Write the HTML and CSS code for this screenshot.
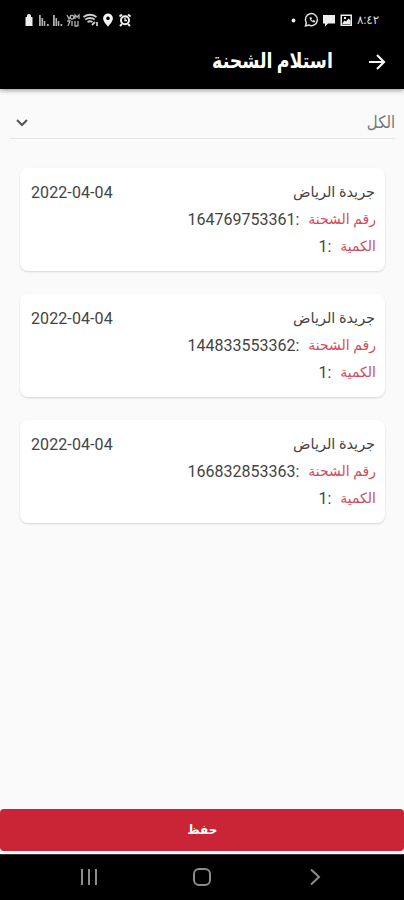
FILE: index.html
```html
<!DOCTYPE html>
<html lang="ar" dir="rtl">
<head>
<meta charset="utf-8">
<title>استلام الشحنة</title>
<link rel="stylesheet" href="styles.css">
</head>
<body>
<div class="app">
  <div class="status" dir="ltr">
    <svg class="status-left" width="108" height="16" viewBox="0 0 108 16" fill="#ddd">
      <path fill="#eee" d="M1.500 5h1.500v-1.300q0-1.700 2-1.700t2 1.700V5h1.500v9h-7z"/>
      <g opacity=".8"><path d="M15 3h1.800v11H15zM17.500 6h1.600v8h-1.600zM19.800 9h1.500v5h-1.500zM23 12h1.700v2H23zM29 3h1.800v11H29zM31.500 6h1.600v8h-1.600zM33.800 9h1.500v5h-1.500zM36.500 12h1.700v2h-1.700z"/>
      <path fill="none" stroke="#ddd" stroke-width="1.300" d="M43 3l2 4 2-4M48 7a1.800 1.800 0 1 1 .1 0M51 7V3l2 2 2-2v4M43 9h3l-2 5M48 9v5M51 9v5h3M54 9v5"/></g>
      <g fill="none" stroke="#ccc" stroke-width="1.800"><path d="M59.500 5q6.500-4.500 13 0M61.300 7.500q4.700-3 9.400 0M63.500 10q2.500-1.500 5 0"/><path d="M68 13l3-3M73 10v4"/></g>
      <path fill="#f5f5f5" fill-rule="evenodd" d="M84 1.500a4.900 4.900 0 0 1 4.900 4.900C88.900 9.500 84 14.500 84 14.500S79.100 9.500 79.100 6.400A4.900 4.900 0 0 1 84 1.500m0 3a1.800 1.800 0 1 0 .01 0z"/>
      <g fill="none" stroke="#eee" stroke-width="2"><circle cx="101" cy="8.300" r="4"/><path d="M95.500 4.500l2.500-2M106.500 4.500l-2.500-2M98 12l-2 2M104 12l2 2"/><path stroke-width="1.300" d="M101 5.500V8.500h2"/></g>
    </svg>
    <div class="status-right">
      <svg width="62" height="16" viewBox="0 0 62 16">
        <circle cx="3.500" cy="8.500" r="1.900" fill="#eee"/>
        <path d="M15.500 14l.8-3.200a6 6 0 1 1 2.400 2.200z" fill="none" stroke="#ddd" stroke-width="1.500"/>
        <path d="M19.500 5.500q.5 4.500 5 5l1-1.500-2-1-1 .8q-1-.5-1.200-1.500l.7-.8-.8-1.500z" fill="#ddd"/>
        <path d="M33 3h12v8.500h-7L35 14.500v-3h-2z" fill="#eee"/>
        <path fill-rule="evenodd" d="M50.500 2.500h11.500v11.500H50.500zM52 4v8.500h8.500V4z" fill="#eee"/><path d="M52.500 11l2-2.500 1.500 1 2.500-3 2 2v3.500h-8zM54 5h2v2h-2z" fill="#eee"/>
      </svg>
      <span class="clock">٨:٤٢</span>
    </div>
  </div>
  <header class="bar">
    <svg width="18" height="18" viewBox="0 0 18 18" fill="none" stroke="#f5f5f5" stroke-width="2.200"><path d="M1 9h15M9 2l7 7-7 7"/></svg>
    <h1>استلام الشحنة</h1>
  </header>
  <main>
    <div class="select">
      <span class="choice">الكل</span>
      <svg width="12" height="8" viewBox="0 0 12 8" fill="none" stroke="#555" stroke-width="2"><path d="M1 1l5 5 5-5"/></svg>
    </div>
    <div class="cards">
      <article class="card">
        <div class="row top"><span class="name">جريدة الرياض</span><time>2022-04-04</time></div>
        <div class="row"><span class="label">رقم الشحنة</span><span class="value">:164769753361</span></div>
        <div class="row"><span class="label">الكمية</span><span class="value">:1</span></div>
      </article>
      <article class="card">
        <div class="row top"><span class="name">جريدة الرياض</span><time>2022-04-04</time></div>
        <div class="row"><span class="label">رقم الشحنة</span><span class="value">:144833553362</span></div>
        <div class="row"><span class="label">الكمية</span><span class="value">:1</span></div>
      </article>
      <article class="card">
        <div class="row top"><span class="name">جريدة الرياض</span><time>2022-04-04</time></div>
        <div class="row"><span class="label">رقم الشحنة</span><span class="value">:166832853363</span></div>
        <div class="row"><span class="label">الكمية</span><span class="value">:1</span></div>
      </article>
    </div>
  </main>
  <button class="save"><span>حفظ</span></button>
  <nav class="nav" dir="ltr">
    <svg width="18" height="18" viewBox="0 0 18 18" stroke="#8c8c8c" stroke-width="2"><path d="M2 1v16M9 1v16M16 1v16"/></svg>
    <svg width="20" height="20" viewBox="0 0 20 20" fill="none" stroke="#8c8c8c" stroke-width="2"><rect x="2" y="2" width="16" height="16" rx="5"/></svg>
    <svg width="12" height="18" viewBox="0 0 12 18" fill="none" stroke="#8c8c8c" stroke-width="2"><path d="M2 1.500L10 9l-8 7.500"/></svg>
  </nav>
</div>
</body>
</html>
```
FILE: styles.css
```css
* { box-sizing: border-box; }
body { margin: 0; font-family: Roboto, "DejaVu Sans", sans-serif; background: #fafafa; }
.app { width: 404px; height: 900px; display: flex; flex-direction: column; overflow: hidden; }
.status { height: 36px; flex: none; background: #000; display: flex; justify-content: space-between; padding: 12px 24px 0; }
.status-right { display: flex; align-items: flex-start; gap: 5px; }
.clock { width: 23px; color: #ddd; font-size: 12px; line-height: 17px; white-space: nowrap; }
.bar { height: 53px; flex: none; background: #000; display: flex; align-items: center; gap: 35px; padding: 0 18px 2px; box-shadow: 0 1px 5px rgba(0,0,0,.45); }
.bar h1 { margin: 0 0 2px; color: #fff; font-size: 21px; line-height: 28px; font-weight: 700; white-space: nowrap; transform: scaleX(.828); transform-origin: right center; }
main { flex: 1; padding: 15px 0 0; }
.select { height: 35px; margin: 0 9px 0 10px; padding: 3px 0 0 6px; display: flex; align-items: center; justify-content: space-between; border-bottom: 1px solid #e6e6e6; }
.choice { margin-bottom: 2px; color: #777; font-size: 17px; line-height: 24px; transform: scaleX(.88); transform-origin: right center; }
.cards { padding: 29px 19px 0 20px; display: flex; flex-direction: column; gap: 23px; }
.card { height: 103px; background: #fff; border-radius: 8px; padding: 11px 9px 0 11px; box-shadow: 0 1px 2px rgba(0,0,0,.15); }
.row { height: 27.500px; display: flex; align-items: center; gap: 9px; color: #444; font-size: 16px; line-height: 27px; white-space: nowrap; }
.top { height: 26.500px; justify-content: space-between; padding-right: 1px; }
.top time { letter-spacing: .1px; }
.name { font-size: 15px; transform: scaleX(.965); transform-origin: right center; }
.label { color: #cf4c62; font-size: 14px; }
.save { flex: none; height: 42px; margin: 0 0 3px; padding: 0; border: 0; border-radius: 4px; background: #c92536; color: #fff; font: 700 13px/40px Roboto, "DejaVu Sans", sans-serif; }
.save span { display: inline-block; transform: scaleX(.92); }
.nav { flex: none; height: 46px; background: #000; border-top: 1px solid #333; display: flex; align-items: center; justify-content: space-between; padding: 0 83px 2px 80px; }
.nav svg:nth-child(2) { margin-right: 4px; }
```
